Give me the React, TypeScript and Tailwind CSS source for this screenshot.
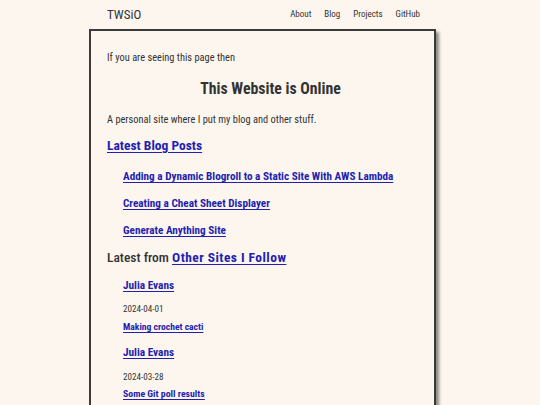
import React from "react";

const posts = [
  "Adding a Dynamic Blogroll to a Static Site With AWS Lambda",
  "Creating a Cheat Sheet Displayer",
  "Generate Anything Site",
];

export default function App() {
  return (
    <div
      className="min-h-screen w-[540px] h-[405px] overflow-hidden bg-[#fcf6ef] text-[#333333]"
      style={{ fontFamily: '"Roboto Condensed", "Liberation Sans", sans-serif' }}
    >
      <div className="ml-[89px] w-[347px]">
        <header className="h-[29px] flex items-center justify-between pl-[18px] pr-[16px]">
          <span className="text-[13px] leading-none">TWSiO</span>
          <nav className="flex gap-[13px] text-[9px] leading-none">
            <a>About</a>
            <a>Blog</a>
            <a>Projects</a>
            <a>GitHub</a>
          </nav>
        </header>
        <main className="border-2 border-[#3a3a3a] shadow-[3px_3px_3px_rgba(0,0,0,0.45)] pl-[16px] pb-[40px]">
          <p className="mt-[20px] text-[10.4px] leading-[14px]">If you are seeing this page then</p>
          <h1 className="mt-[14px] text-[15.8px] leading-[20px] font-bold text-center">This Website is Online</h1>
          <p className="mt-[14px] text-[10.4px] leading-[14px]">A personal site where I put my blog and other stuff.</p>
          <h2 className="mt-[9px] text-[13.5px] leading-[18px] font-bold">
            <a className="text-[#1f1fb0] underline underline-offset-2">Latest Blog Posts</a>
          </h2>
          <ul className="pl-[16px]">
            {posts.map((p, i) => (
              <li key={p} className={(i === 0 ? "mt-[16px]" : "mt-[13px]") + " text-[11.2px] leading-[14px] font-bold"}>
                <a className="text-[#1f1fb0] underline underline-offset-2">{p}</a>
              </li>
            ))}
          </ul>
          <h3 className="mt-[10px] text-[13.5px] leading-[18px] font-medium">
            Latest from{" "}
            <a className="text-[#1f1fb0] underline underline-offset-2 font-bold tracking-[0.45px]">Other Sites I Follow</a>
          </h3>
          <div className="pl-[16px]">
            <div className="mt-[13px] text-[11.3px] leading-[14px] font-bold">
              <a className="text-[#1f1fb0] underline underline-offset-2">Julia Evans</a>
            </div>
            <div className="mt-[9px] text-[9.1px] leading-[14px]">2024-04-01</div>
            <div className="mt-[4px] text-[9.6px] leading-[14px] font-bold">
              <a className="text-[#1f1fb0] underline underline-offset-2">Making crochet cacti</a>
            </div>
            <div className="mt-[12px] text-[11.3px] leading-[14px] font-bold">
              <a className="text-[#1f1fb0] underline underline-offset-2">Julia Evans</a>
            </div>
            <div className="mt-[10px] text-[9.1px] leading-[14px]">2024-03-28</div>
            <div className="mt-[3px] text-[9.8px] leading-[14px] font-bold">
              <a className="text-[#1f1fb0] underline underline-offset-2">Some Git poll results</a>
            </div>
          </div>
        </main>
      </div>
    </div>
  );
}
